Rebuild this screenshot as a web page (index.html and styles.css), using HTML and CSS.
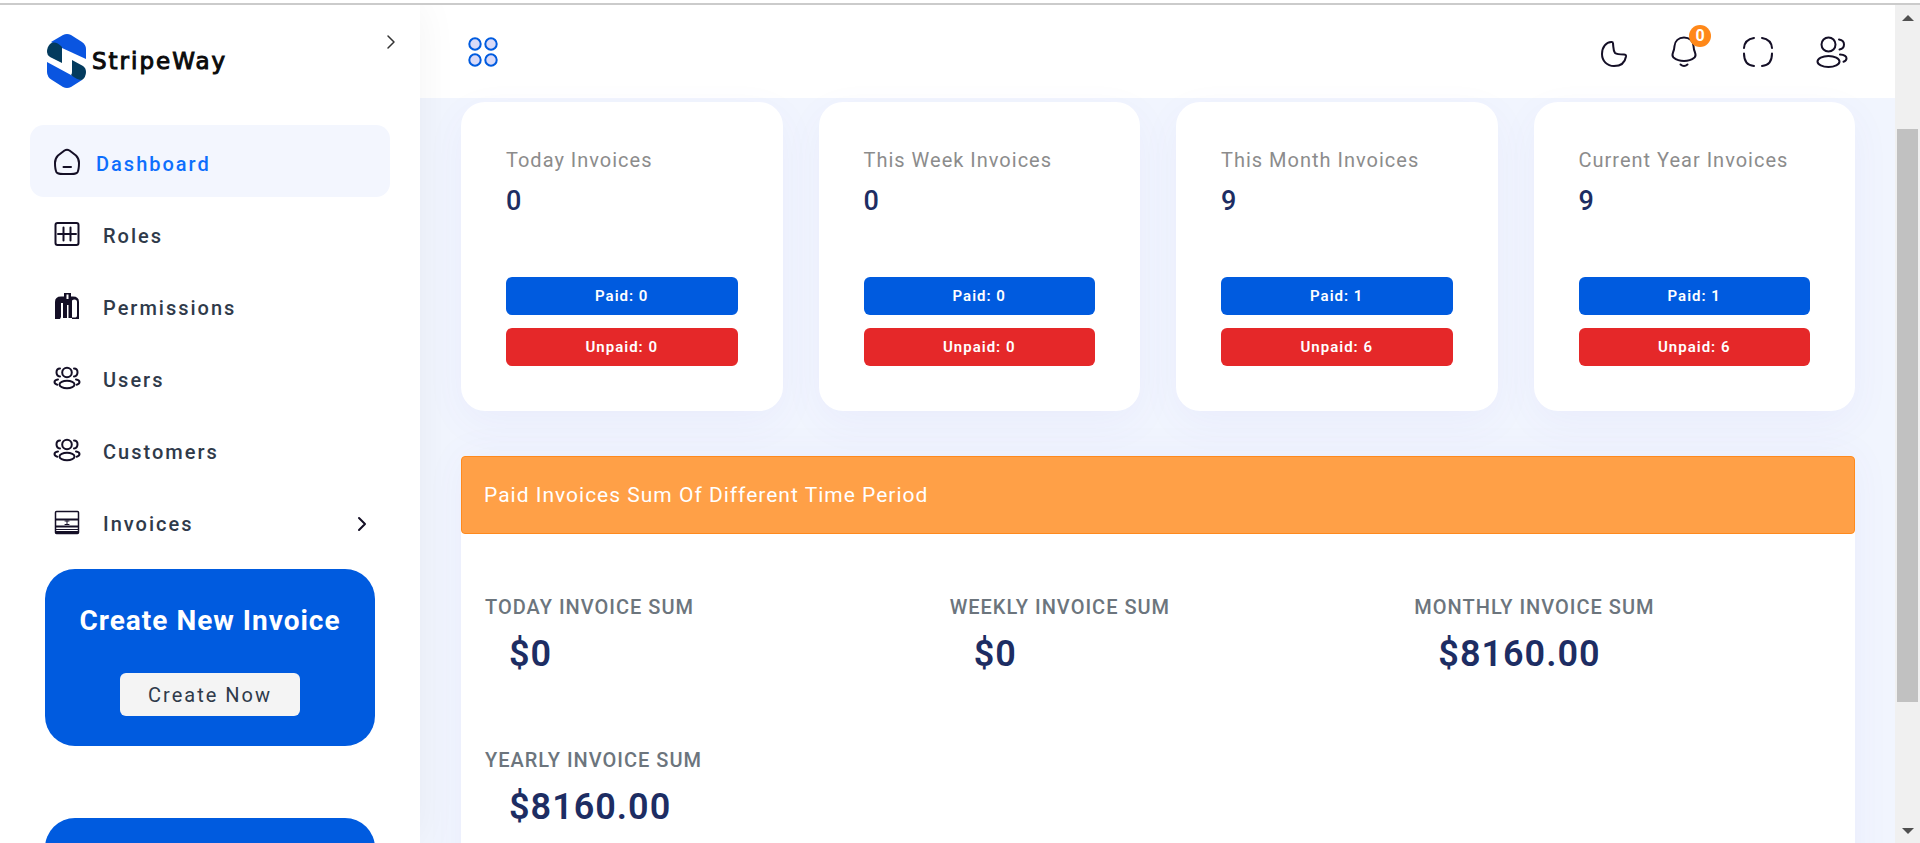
FILE: index.html
```html
<!DOCTYPE html>
<html lang="en">
<head>
    <meta charset="UTF-8">
    <meta name="viewport" content="width=device-width, initial-scale=1.0">
    <title>StripeWay - Dashboard</title>
    <link rel="stylesheet" href="styles.css">
</head>
<body>
    <svg class="sprite" aria-hidden="true">
        <symbol id="icon-people" viewBox="0 0 28 28">
            <circle cx="14" cy="8.5" r="4.8"/>
            <ellipse cx="14" cy="20.5" rx="7.5" ry="3.8"/>
            <path d="M7 4.5C4.6 4.5 3.5 6.3 3.5 8.3S4.7 12.3 7 12.5M21 4.5c2.4 0 3.5 1.8 3.5 3.8s-1.2 4-3.5 4.2M5 15.500c-2 .3-3.500 1.3-3.500 2.6 0 1.3 1 2.2 2.800 2.6M23 15.500c2 .3 3.500 1.3 3.500 2.6 0 1.3-1 2.2-2.800 2.6"/>
        </symbol>
        <symbol id="icon-chevron" viewBox="0 0 10 16">
            <path d="M2 2l6 6-6 6"/>
        </symbol>
    </svg>

    <div class="page">
        <aside class="sidebar">
            <div class="brand">
                <a class="logo" href="#">
                    <svg class="logo-mark" viewBox="0 0 40 54" aria-hidden="true">
                        <path fill="#0a55e0" d="M4 8L16 1q4-2 8 0l11 7q4 3 4 7v10L15 14 4 8z"/>
                        <path fill="#033b5e" d="M15 13Q8 6 3 10 0 13 0 18q0 3 3 5l12 6V13z"/>
                        <path fill="#0a55e0" d="M0 28l24 13 11 5-11 7q-4 2-8 0L5 46q-5-3-5-8z"/>
                        <path fill="#033b5e" d="M25 26l11 6q3 2 3 6 0 5-4 8-5 0-11-5 1-1 1-3z"/>
                    </svg>
                    <span class="logo-text">StripeWay</span>
                </a>
                <button class="collapse-btn" aria-label="Collapse menu">
                    <svg class="chevron"><use href="#icon-chevron"/></svg>
                </button>
            </div>

            <nav class="menu">
                <a class="menu-item active" href="#">
                    <svg class="menu-icon" viewBox="0 0 28 28">
                        <path d="M11.5 2.500L5 7.500Q2 10.500 2 15c0 4 .4 7 1.500 9.200.9 1.600 2.500 1.800 10.500 1.800s9.600-.2 10.500-1.800c1.100-2.200 1.500-5.200 1.500-9.200q0-4.500-3-7.500l-6.500-5Q14 1 11.500 2.500zM10.500 19h7.500"/>
                    </svg>
                    <span>Dashboard</span>
                </a>
                <a class="menu-item" href="#">
                    <svg class="menu-icon" viewBox="0 0 28 28">
                        <rect x="2.500" y="3" width="23" height="22" rx="2"/>
                        <path d="M5 14h18M10.500 7.500v13M17.500 7.500v13"/>
                    </svg>
                    <span>Roles</span>
                </a>
                <a class="menu-item" href="#">
                    <svg class="menu-icon" viewBox="0 0 28 28">
                        <path class="solid" d="M2 27V10q0-5.500 6-5.500h3V1h7v3.500h2q6 0 6 5.500v17h-7v-1.500h3.500q1.500 0 1.500-2V10q0-2.500-2.500-2.500-1.500 0-2.500 1V26h-3.500V13H14v13h-4V11H8v14l-1 2H2zM13.500 2.500V7h2V2.500z"/>
                    </svg>
                    <span>Permissions</span>
                </a>
                <a class="menu-item" href="#">
                    <svg class="menu-icon"><use href="#icon-people"/></svg>
                    <span>Users</span>
                </a>
                <a class="menu-item" href="#">
                    <svg class="menu-icon"><use href="#icon-people"/></svg>
                    <span>Customers</span>
                </a>
                <a class="menu-item" href="#">
                    <svg class="menu-icon" viewBox="0 0 28 28">
                        <rect x="2.500" y="3.500" width="23" height="22" rx="1" stroke-width="1.500"/>
                        <path d="M3 11.500h22M3 18.500h22M3 24h22"/>
                        <path d="M3 21.500h22M12 13h4M12 16.500h4M14 13v3" stroke-width="1"/>
                    </svg>
                    <span>Invoices</span>
                    <svg class="chevron"><use href="#icon-chevron"/></svg>
                </a>
            </nav>

            <div class="promo">
                <h2>Create New Invoice</h2>
                <button class="promo-btn">Create Now</button>
            </div>
            <div class="promo"></div>
        </aside>

        <div class="main">
            <header class="topbar">
                <button class="icon-btn" aria-label="Toggle sidebar">
                    <svg class="grid-icon" viewBox="0 0 32 32">
                        <circle cx="8" cy="8" r="5.700"/>
                        <circle cx="24" cy="8" r="5.700"/>
                        <circle cx="8" cy="24" r="5.700"/>
                        <circle cx="24" cy="24" r="5.700"/>
                    </svg>
                </button>
                <div class="topbar-actions">
                    <button class="icon-btn moon" aria-label="Dark mode">
                        <svg viewBox="0 0 28 32">
                            <path d="M14 6C8 5.500 4 11.500 4 18c0 7 5 12 12 12 6.500 0 11-3.500 12-9.500.2-1.500-.5-2-2-2-4 0-7 0-9-1.500C15 14 15.500 11 15 7.500 14.900 6.500 14.800 6 14 6z"/>
                        </svg>
                    </button>
                    <button class="icon-btn" aria-label="Notifications">
                        <svg viewBox="0 0 32 32">
                            <path d="M16 1.500c-5.500 0-9 3.500-9.500 8.500-.2 3-.3 4-1.500 6.500C4 19 4 20 5.500 21.500 8 23.500 12 25 16 25s8-1.500 10.500-3.500C28 20 28 19 27 16.500c-1.200-2.500-1.300-3.500-1.500-6.500C25 5 21.500 1.500 16 1.500zM12.500 28.500q3.500 3 7 0"/>
                        </svg>
                        <span class="badge">0</span>
                    </button>
                    <button class="icon-btn" aria-label="Full screen">
                        <svg viewBox="0 0 32 32">
                            <path d="M12 2C5.500 3 2.500 6 2 12M20 2c6.500 1 9.500 4 10 10M2 17.500C2 25 5 29.500 12 30M30 17.500C30 25 27 29.500 20 30"/>
                        </svg>
                    </button>
                    <button class="icon-btn" aria-label="Account">
                        <svg viewBox="0 0 32 32">
                            <circle cx="12.500" cy="8.500" r="7"/>
                            <ellipse cx="12.500" cy="25.500" rx="11" ry="5.500"/>
                            <path d="M23 3.500c3 .5 5 2.500 5 5s-2 4.500-4.500 5M24 18.500c4 .3 6.500 1.700 6.500 3.800 0 1.700-1 2.900-3 3.500"/>
                        </svg>
                    </button>
                </div>
            </header>

            <main class="content">
                <section class="stats">
                    <div class="stat-card">
                        <p class="stat-label">Today Invoices</p>
                        <p class="stat-value">0</p>
                        <button class="pill paid">Paid: 0</button>
                        <button class="pill unpaid">Unpaid: 0</button>
                    </div>
                    <div class="stat-card">
                        <p class="stat-label">This Week Invoices</p>
                        <p class="stat-value">0</p>
                        <button class="pill paid">Paid: 0</button>
                        <button class="pill unpaid">Unpaid: 0</button>
                    </div>
                    <div class="stat-card">
                        <p class="stat-label">This Month Invoices</p>
                        <p class="stat-value">9</p>
                        <button class="pill paid">Paid: 1</button>
                        <button class="pill unpaid">Unpaid: 6</button>
                    </div>
                    <div class="stat-card">
                        <p class="stat-label">Current Year Invoices</p>
                        <p class="stat-value">9</p>
                        <button class="pill paid">Paid: 1</button>
                        <button class="pill unpaid">Unpaid: 6</button>
                    </div>
                </section>

                <section class="sums">
                    <h3 class="sums-title">Paid Invoices Sum Of Different Time Period</h3>
                    <div class="sums-grid">
                        <div class="sum">
                            <p class="sum-label">TODAY INVOICE SUM</p>
                            <p class="sum-value">$0</p>
                        </div>
                        <div class="sum">
                            <p class="sum-label">WEEKLY INVOICE SUM</p>
                            <p class="sum-value">$0</p>
                        </div>
                        <div class="sum">
                            <p class="sum-label">MONTHLY INVOICE SUM</p>
                            <p class="sum-value">$8160.00</p>
                        </div>
                        <div class="sum">
                            <p class="sum-label">YEARLY INVOICE SUM</p>
                            <p class="sum-value">$8160.00</p>
                        </div>
                    </div>
                </section>
            </main>
        </div>

        <div class="scrollbar" aria-hidden="true">
            <span class="arrow-up"></span>
            <div class="track"><div class="thumb"></div></div>
            <span class="arrow-down"></span>
        </div>
    </div>
</body>
</html>
```
FILE: styles.css
```css
* {
    box-sizing: border-box;
}

body {
    margin: 0;
    padding-top: 3px;
    height: 100vh;
    overflow: hidden;
    font-family: Roboto, sans-serif;
    letter-spacing: 1px;
    color: #2f3a4a;
    background: #fff;
}

h2, h3, p {
    margin: 0;
}

a {
    color: inherit;
    text-decoration: none;
}

button {
    padding: 0;
    border: none;
    background: none;
    font-family: inherit;
    letter-spacing: inherit;
    cursor: pointer;
}

svg {
    fill: none;
    stroke: #140f26;
    stroke-width: 2;
    stroke-linecap: round;
    stroke-linejoin: round;
    overflow: visible;
}

.sprite {
    display: none;
}

.page {
    display: flex;
    height: 100%;
    border-top: 2px solid #cbcbcb;
    overflow: hidden;
}

/* Sidebar */
.sidebar {
    flex: 0 0 420px;
    padding: 29px 30px;
    background: #fff;
    box-shadow: 0 0 40px rgba(0, 0, 0, 0.05);
    z-index: 2;
    overflow: hidden;
}

.brand {
    display: flex;
    justify-content: space-between;
    align-items: flex-start;
    height: 91px;
    padding-left: 17px;
}

.logo {
    display: flex;
    align-items: center;
    gap: 5px;
}

.logo-mark {
    width: 40px;
    height: 54px;
    stroke: none;
}

.logo-text {
    font-family: "DejaVu Sans", sans-serif;
    font-size: 23px;
    letter-spacing: 2px;
    color: #0b0b0b;
    -webkit-text-stroke: 1px #0b0b0b;
}

.chevron {
    width: 10px;
    height: 16px;
}

.collapse-btn {
    margin-right: -6px;
}

.collapse-btn .chevron {
    stroke: #333;
    stroke-width: 1.5;
}

.menu-item {
    display: flex;
    align-items: center;
    gap: 22px;
    height: 72px;
    padding: 5px 23px 0;
    border-radius: 14px;
    font-size: 20px;
    font-weight: 500;
    letter-spacing: 2px;
}

.menu-item.active {
    gap: 15px;
    background: #f3f6fe;
    color: #0d6efd;
}

.menu-item .chevron {
    margin-left: auto;
}

.menu-icon {
    width: 28px;
    height: 28px;
    margin-bottom: 4px;
}

.menu-icon .solid {
    fill: #140f26;
    fill-rule: evenodd;
    stroke: none;
}

.promo {
    min-height: 177px;
    margin: 12px 15px 72px;
    padding: 34px 20px 30px;
    border-radius: 30px;
    background: #005bdf;
    text-align: center;
}

.promo h2 {
    margin-bottom: 34px;
    font-size: 28px;
    line-height: 36px;
    color: #fff;
}

.promo-btn {
    width: 180px;
    height: 43px;
    border-radius: 6px;
    background: #f4f4f4;
    font-size: 20px;
    letter-spacing: 2px;
    color: #2f3a4a;
}

/* Main column */
.main {
    flex: 1;
    min-width: 0;
    background: #f1f5fe;
}

.topbar {
    display: flex;
    justify-content: space-between;
    align-items: center;
    height: 93px;
    padding: 0 47px;
    background: #fff;
}

.topbar-actions {
    display: flex;
    gap: 42px;
}

.icon-btn {
    position: relative;
    width: 32px;
    height: 32px;
}

.icon-btn svg {
    display: block;
    width: 100%;
    height: 32px;
}

.icon-btn.moon {
    width: 28px;
}

.icon-btn .grid-icon {
    fill: #d9daf8;
    stroke: #005bdf;
}

.badge {
    position: absolute;
    top: -11px;
    right: -11px;
    width: 22px;
    height: 22px;
    border-radius: 50%;
    background: #ff8819;
    color: #fff;
    font-size: 16px;
    font-weight: 700;
    line-height: 22px;
    letter-spacing: 0;
}

.content {
    padding: 4px 40px 0 41px;
}

.stats {
    display: grid;
    grid-template-columns: repeat(4, 1fr);
    gap: 36px;
    margin-bottom: 45px;
}

.stat-card {
    display: flex;
    flex-direction: column;
    padding: 42px 45px 45px;
    border-radius: 24px;
    background: #fff;
    box-shadow: 0 12px 40px rgba(100, 80, 220, 0.05);
}

.stat-label {
    font-size: 20px;
    line-height: 32px;
    color: #8c8c8c;
}

.stat-value {
    margin: 7px 0 58px;
    font-size: 27px;
    font-weight: 500;
    line-height: 36px;
    color: #1d2d63;
}

.pill {
    height: 38px;
    border-radius: 6px;
    color: #fff;
    font-size: 15px;
    font-weight: 600;
}

.paid {
    margin-bottom: 13px;
    background: #005bdf;
}

.unpaid {
    background: #e52829;
}

.sums {
    background: #fff;
    border-radius: 4px;
    box-shadow: 0 0 40px rgba(100, 80, 220, 0.05);
}

.sums-title {
    padding: 22px;
    border: 1px solid #ff8a1d;
    border-radius: 4px;
    background: #ffa047;
    color: #fff;
    font-size: 21px;
    font-weight: 400;
    line-height: 32px;
}

.sums-grid {
    display: grid;
    grid-template-columns: repeat(3, 1fr);
    row-gap: 68px;
    padding: 57px 0 60px;
}

.sum {
    padding-left: 24px;
}

.sum-label {
    font-size: 20px;
    font-weight: 500;
    line-height: 32px;
    color: #6c757d;
}

.sum-value {
    margin-top: 9px;
    padding-left: 24px;
    font-size: 36px;
    font-weight: 600;
    line-height: 44px;
    color: #1d2d63;
}

/* Scroll bar */
.scrollbar {
    display: flex;
    flex-direction: column;
    align-items: center;
    flex: 0 0 25px;
    padding: 10px 0 9px;
    background: #f0f0f0;
}

.track {
    display: flex;
    justify-content: center;
    flex: 1;
    width: 100%;
    padding-top: 108px;
}

.thumb {
    width: 21px;
    height: 82%;
    background: #c1c1c1;
}

.arrow-up, .arrow-down {
    border: 6px solid transparent;
}

.arrow-up {
    border-top: none;
    border-bottom-color: #505050;
}

.arrow-down {
    border-bottom: none;
    border-top-color: #505050;
}
```
